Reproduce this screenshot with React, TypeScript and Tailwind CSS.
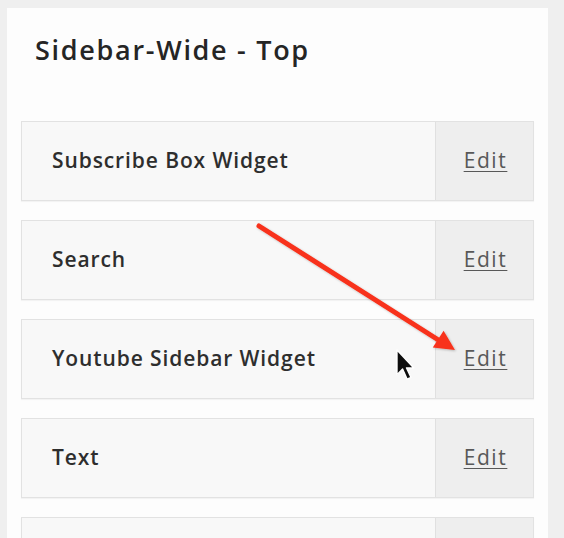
import React from "react";

const rows = ["Subscribe Box Widget", "Search", "Youtube Sidebar Widget", "Text", ""];

function Row({ label }: { label: string }) {
  return (
    <div className="flex h-[80px] shrink-0 border border-[#e2e2e2] bg-[#f8f8f8] shadow-[0_1px_1px_rgba(0,0,0,0.04)]">
      <div className="flex flex-1 items-center pl-[30px] text-[21px] font-semibold tracking-[0.9px] text-[#2e2e2e]">
        {label}
      </div>
      <div className="flex w-[98px] items-center justify-center border-l border-[#e0e0e0] bg-[#eeeeee]">
        {label !== "" && (
          <span className="pl-[2px] text-[21px] tracking-[1.6px] text-[#585858] underline decoration-1 underline-offset-[3px]">Edit</span>
        )}
      </div>
    </div>
  );
}

export default function App() {
  return (
    <div
      className="relative h-[538px] w-[564px] overflow-hidden bg-[#efefef]"
      style={{ fontFamily: '"Open Sans", "Liberation Sans", sans-serif' }}
    >
      <div className="ml-[7px] mt-[8px] h-[600px] w-[541px] bg-[#fdfdfd] px-[14px]">
        <div className="pt-[22px] pl-[14px] text-[27px] font-semibold leading-[40px] tracking-[1.7px] text-[#252525]">Sidebar-Wide - Top</div>
        <div className="mt-[51px] flex flex-col gap-[19px]">
          {rows.map((r, i) => (
            <Row key={i} label={r} />
          ))}
        </div>
      </div>
      <svg className="pointer-events-none absolute left-0 top-0" width="564" height="538">
        <defs>
          <filter id="sh" x="-20%" y="-20%" width="140%" height="140%">
            <feDropShadow dx="1" dy="1" stdDeviation="1" floodColor="#000" floodOpacity="0.25" />
          </filter>
          <filter id="bl">
            <feGaussianBlur stdDeviation="0.6" />
          </filter>
        </defs>
        <g filter="url(#sh)">
          <line x1="259" y1="226" x2="440" y2="341" stroke="#f8301a" strokeWidth="5" strokeLinecap="round" />
          <polygon points="455,350 432.8,347.6 443.6,330.8" fill="#f8301a" />
        </g>
        <g filter="url(#bl)" transform="translate(397,350) scale(1.12)">
          <path d="M0 0 L0 22 L5 17 L9 26 L12.5 24.5 L8.5 16 L15 16 Z" fill="#111" stroke="#fff" strokeWidth="1.2" strokeLinejoin="round" />
        </g>
      </svg>
    </div>
  );
}
